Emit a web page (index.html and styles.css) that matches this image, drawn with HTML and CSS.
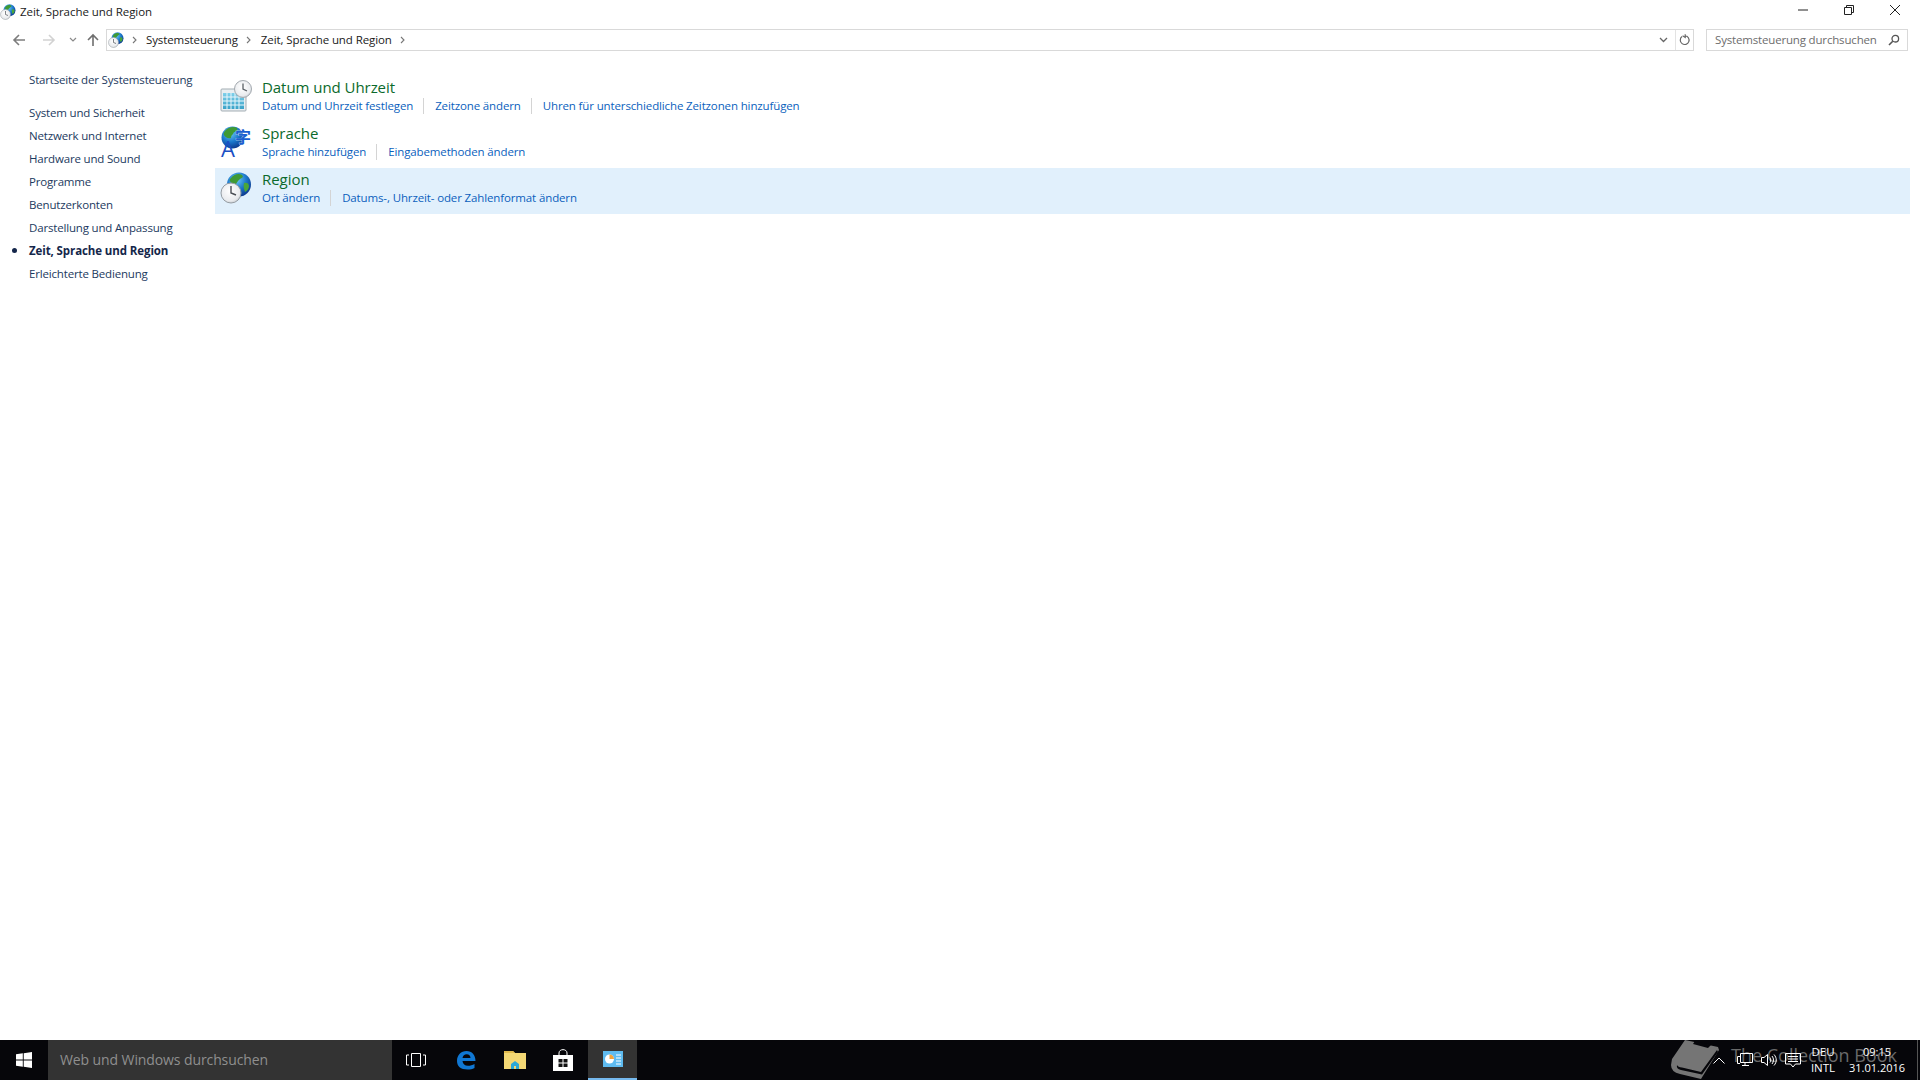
FILE: index.html
```html
<!DOCTYPE html>
<html lang="de">
<head>
<meta charset="utf-8">
<title>Zeit, Sprache und Region</title>
<link rel="stylesheet" href="styles.css">
</head>
<body>
<div class="window">
  <header class="titlebar">
    <svg class="ic16" viewBox="0 0 32 32">
      <defs>
        <radialGradient id="globe" cx="0.4" cy="0.3" r="0.8">
          <stop offset="0" stop-color="#6fcbf7"/><stop offset="0.5" stop-color="#1c78cc"/><stop offset="1" stop-color="#0a2a7e"/>
        </radialGradient>
        <radialGradient id="face" cx="0.45" cy="0.4" r="0.7">
          <stop offset="0" stop-color="#ffffff"/><stop offset="0.7" stop-color="#e9ebee"/><stop offset="1" stop-color="#b1b7bc"/>
        </radialGradient>
        <linearGradient id="cal" x1="0" y1="0" x2="0" y2="1">
          <stop offset="0" stop-color="#7fd0ea"/><stop offset="1" stop-color="#3aa2c8"/>
        </linearGradient>
        <symbol id="region" viewBox="0 0 32 32">
          <circle cx="19" cy="12.500" r="12" fill="url(#globe)"/>
          <path d="M11 6c3-4 8-5 11-3 2 2 0 3-2 4-2 2-3 3-4 5-3 1-5-1-6-3-1-1 0-2 1-3z" fill="#3f9a34"/>
          <path d="M24 11c2-1 5 0 5 3 0 3-2 5-4 6-1-3-2-6-1-9z" fill="#4aa63a"/>
          <circle cx="11" cy="21" r="10" fill="url(#face)" stroke="#969da3" stroke-width="1"/>
          <path d="M11 14v7l5 2" fill="none" stroke="#4a4f55" stroke-width="1.400"/>
        </symbol>
      </defs>
      <use href="#region"/>
    </svg>
    <span class="title-text">Zeit, Sprache und Region</span>
    <div class="winctl">
      <span class="wbtn"><svg width="12" height="12" viewBox="0 0 12 12"><path d="M1 6h10" stroke="#222" stroke-width="1"/></svg></span>
      <span class="wbtn"><svg width="12" height="12" viewBox="0 0 12 12"><path d="M1.500 3.500h7v7h-7zM3.500 3.500v-2h7v7h-2" fill="none" stroke="#222" stroke-width="1"/></svg></span>
      <span class="wbtn"><svg width="12" height="12" viewBox="0 0 12 12"><path d="M1 1l10 10M11 1L1 11" stroke="#222" stroke-width="1"/></svg></span>
    </div>
  </header>

  <nav class="navbar">
    <div class="navbtns">
      <svg class="nb nb-back" width="14" height="14" viewBox="0 0 14 14"><path d="M13 7H2M7 2L2 7l5 5" fill="none" stroke="#7d7d7d" stroke-width="1.600"/></svg>
      <svg class="nb nb-fwd" width="14" height="14" viewBox="0 0 14 14"><path d="M1 7h11M7 2l5 5-5 5" fill="none" stroke="#d2d2d2" stroke-width="1.600"/></svg>
      <svg class="nb nb-down" width="8" height="6" viewBox="0 0 8 6"><path d="M1 1l3 3 3-3" fill="none" stroke="#8a8a8a" stroke-width="1.200"/></svg>
      <svg class="nb nb-up" width="14" height="14" viewBox="0 0 14 14"><path d="M7 13V2M2 7l5-5 5 5" fill="none" stroke="#6f6f6f" stroke-width="1.600"/></svg>
    </div>
    <div class="address">
      <svg class="ic16" viewBox="0 0 32 32"><use href="#region"/></svg>
      <svg class="crumb-sep first" width="5" height="8" viewBox="0 0 5 8"><path d="M1 1l3 3-3 3" fill="none" stroke="#777" stroke-width="1.100"/></svg>
      <span class="crumb">Systemsteuerung</span>
      <svg class="crumb-sep" width="5" height="8" viewBox="0 0 5 8"><path d="M1 1l3 3-3 3" fill="none" stroke="#777" stroke-width="1.100"/></svg>
      <span class="crumb">Zeit, Sprache und Region</span>
      <svg class="crumb-sep" width="5" height="8" viewBox="0 0 5 8"><path d="M1 1l3 3-3 3" fill="none" stroke="#777" stroke-width="1.100"/></svg>
      <span class="spacer"></span>
      <svg class="addr-drop" width="9" height="6" viewBox="0 0 9 6"><path d="M1 1l3.500 3.500L8 1" fill="none" stroke="#666" stroke-width="1.300"/></svg>
      <span class="refresh">
        <svg width="12" height="12" viewBox="0 0 12 12"><path d="M3 2.600a4.400 4.400 0 1 0 3-.9M6.200 .2v3.200L3.600 1.800" fill="none" stroke="#666" stroke-width="1.200"/></svg>
      </span>
    </div>
    <div class="searchbox">
      <span class="search-text">Systemsteuerung durchsuchen</span>
      <svg width="12" height="12" viewBox="0 0 12 12"><circle cx="7.300" cy="4.700" r="3.300" fill="none" stroke="#555" stroke-width="1.300"/><path d="M4.800 7.200L1 11" stroke="#555" stroke-width="1.600"/></svg>
    </div>
  </nav>

  <main class="body">
    <aside class="sidebar">
      <a class="side-home">Startseite der Systemsteuerung</a>
      <a class="side-link">System und Sicherheit</a>
      <a class="side-link">Netzwerk und Internet</a>
      <a class="side-link">Hardware und Sound</a>
      <a class="side-link">Programme</a>
      <a class="side-link">Benutzerkonten</a>
      <a class="side-link">Darstellung und Anpassung</a>
      <a class="side-link current">Zeit, Sprache und Region</a>
      <a class="side-link">Erleichterte Bedienung</a>
    </aside>
    <section class="content">
      <div class="item">
        <svg class="ic32" viewBox="0 0 32 32">
          <rect x="1" y="9" width="25" height="22" rx="1" fill="#e9eef1" stroke="#a3adb3"/>
          <rect x="3" y="13" width="21" height="16" fill="url(#cal)"/>
          <path d="M3 17h21M3 21h21M3 25h21M7 13v16M11 13v16M15 13v16M19 13v16" stroke="#eaf6fb" stroke-width="1"/>
          <circle cx="23" cy="9" r="8.500" fill="url(#face)" stroke="#a3a9af"/>
          <path d="M23 3.500V9l4 2" fill="none" stroke="#5a6066" stroke-width="1.300"/>
        </svg>
        <div class="item-text">
          <h2 class="item-head">Datum und Uhrzeit</h2>
          <div class="item-links"><a>Datum und Uhrzeit festlegen</a><a>Zeitzone ändern</a><a>Uhren für unterschiedliche Zeitzonen hinzufügen</a></div>
        </div>
      </div>
      <div class="item">
        <svg class="ic32 ic-lang" viewBox="0 0 32 32">
          <circle cx="12.500" cy="11.500" r="11" fill="url(#globe)"/>
          <path d="M5 5c3-4 9-5 12-3 1 2-1 4-3 4-1 3-3 3-3 6-3 1-6-1-7-3-1-1 0-3 1-4z" fill="#3f9a34"/>
          <text class="glyph-a" x="1" y="31">A</text>
          <text class="glyph-zi" x="15" y="17">字</text>
        </svg>
        <div class="item-text">
          <h2 class="item-head">Sprache</h2>
          <div class="item-links"><a>Sprache hinzufügen</a><a>Eingabemethoden ändern</a></div>
        </div>
      </div>
      <div class="item active">
        <svg class="ic32" viewBox="0 0 32 32"><use href="#region"/></svg>
        <div class="item-text">
          <h2 class="item-head">Region</h2>
          <div class="item-links"><a>Ort ändern</a><a>Datums-, Uhrzeit- oder Zahlenformat ändern</a></div>
        </div>
      </div>
    </section>
  </main>

  <footer class="taskbar">
    <div class="watermark">
      <svg width="56" height="40" viewBox="0 0 56 40">
        <path d="M4 19L17 0l33 7 1 3-18 29-21-5q-9-2-9-9z" fill="#757575"/>
        <path d="M9 25q1 2 5 2.500l19 4.500L49 10l1 2-16 22.500L13 30q-5-1-4-5z" fill="#06060a"/>
        <path d="M27 1l16 4-3 3-15-4z" fill="#06060a"/>
      </svg>
      <span class="wm-text">The Collection Book</span>
    </div>
    <div class="start">
      <svg width="16" height="16" viewBox="0 0 16 16"><path d="M0 2.300L6.800 1.300V7.500H0zM7.700 1.200L16 0V7.500H7.700zM0 8.400H6.800V14.700L0 13.700zM7.700 8.400H16V16L7.700 14.800z" fill="#fff"/></svg>
    </div>
    <div class="tb-search">Web und Windows durchsuchen</div>
    <div class="tb-btn nudge">
      <svg width="20" height="14" viewBox="0 0 20 14"><path d="M5.500.5h9v13h-9zM3 2H.5v10H3M17 2h2.500v10H17" fill="none" stroke="#fff"/></svg>
    </div>
    <div class="tb-btn">
      <svg width="20" height="20" viewBox="0 0 20 20"><path d="M1 11C1 5 5 1 10.500 1 16 1 19.500 5 19.500 11H6.500c.3 3 2.300 4.800 5.500 4.800 2.400 0 4.500-.6 6.500-1.800v4c-2 1-4.300 1.500-6.900 1.500C4.500 19.500 1 16 1 11zM6.500 8h8c0-2.500-1.500-3.800-3.800-3.800S6.900 5.500 6.500 8z" fill="#1077d3"/></svg>
    </div>
    <div class="tb-btn">
      <svg width="22" height="20" viewBox="0 0 22 20"><path d="M0 1h9l2 2h11v16H0z" fill="#f3d774"/><path d="M0 1h9l2 2H0z" fill="#e0b94c"/><path d="M7 19v-5l4-3 4 3v5h-3v-3h-2v3z" fill="#2ba8d8"/></svg>
    </div>
    <div class="tb-btn nudge">
      <svg width="20" height="22" viewBox="0 0 20 22"><path d="M6 6V4c0-4.500 8-4.500 8 0v2" fill="none" stroke="#fff"/><path d="M0 6h20v16H0z" fill="#fff"/><path d="M5.500 10h4v3.500h-4zM10.500 10h4v3.500h-4zM5.500 14.500h4V18h-4zM10.500 14.500h4V18h-4z" fill="#111"/></svg>
    </div>
    <div class="tb-btn running">
      <svg width="20" height="16" viewBox="0 0 20 16"><rect width="20" height="16" fill="#5ebbf0"/><circle cx="6.500" cy="8" r="4.500" fill="#fff"/><path d="M6.500 8V3.500A4.500 4.500 0 0 1 11 8z" fill="#f2a33a"/><path d="M13 4h5M13 7h5M13 10h5M13 13h5" stroke="#fff"/></svg>
    </div>
    <span class="tb-spacer"></span>
    <div class="tray">
      <svg class="t-chev" width="12" height="7" viewBox="0 0 12 7"><path d="M.5 6.500L6 1l5.500 5.500" fill="none" stroke="#fff"/></svg>
      <svg class="t-net" width="16" height="14" viewBox="0 0 16 14"><path d="M3.500.5h12v9h-12zM8 9.500v3M5 12.500h7M.5 3.500H3M.5 3.500v7H3" fill="none" stroke="#fff"/></svg>
      <svg class="t-vol" width="16" height="14" viewBox="0 0 16 14"><path d="M.5 4.500h2.500l3.500-3v11l-3.500-3H.5zM9 4.500c1 1.500 1 3.500 0 5M11 3c2 2.500 2 5.500 0 8M13 1.500c3 3.500 3 7.500 0 11" fill="none" stroke="#fff"/></svg>
      <svg class="t-msg" width="16" height="15" viewBox="0 0 16 15"><path d="M.5.500h15v10.500h-5l-2.500 3-2.500-3h-5zM3 3.500h10M3 6h10M3 8.500h10" fill="none" stroke="#fff"/></svg>
      <div class="t-lang"><span>DEU</span><span>INTL</span></div>
      <div class="t-clock"><span>09:15</span><span>31.01.2016</span></div>
      <span class="t-show"></span>
    </div>
  </footer>
</div>
</body>
</html>
```
FILE: styles.css
```css
* { box-sizing: border-box; }
html, body { margin: 0; height: 100%; }
body { background: #fff; font-family: "Open Sans", "Noto Sans", sans-serif; font-size: 11.500px; color: #1a1a1a; overflow: hidden; }
.window { height: 1080px; display: flex; flex-direction: column; }

.ic16 { width: 16px; height: 16px; flex: none; }
.ic32 { width: 32px; height: 32px; flex: none; }

.titlebar { height: 24px; display: flex; align-items: center; flex: none; }
.title-text { margin-left: 4px; margin-top: -2px; letter-spacing: -0.050px; }
.winctl { margin-left: auto; display: flex; margin-right: 2px; margin-top: -4px; }
.wbtn { width: 46px; height: 20px; display: flex; align-items: center; justify-content: center; }

.navbar { height: 22px; margin-top: 5px; display: flex; flex: none; }
.navbtns { width: 106px; display: flex; align-items: center; flex: none; }
.nb { flex: none; }
.nb-back { margin-left: 12px; }
.nb-fwd { margin-left: 16px; }
.nb-down { margin-left: 13px; }
.nb-up { margin-left: 9px; }

.address { width: 1588px; border: 1px solid #d9d9d9; display: flex; align-items: center; padding-left: 1px; flex: none; }
.crumb { letter-spacing: -0.100px; color: #1a1a1a; margin-top: -2px; }
.crumb-sep { margin: 0 10px 0 8px; flex: none; }
.crumb-sep.first { margin-left: 8px; margin-right: 9px; }
.spacer { flex: 1; }
.addr-drop { margin-right: 7px; }
.refresh { width: 18px; height: 100%; border-left: 1px solid #e3e3e3; display: flex; align-items: center; justify-content: center; }

.searchbox { width: 202px; margin-left: 12px; border: 1px solid #d9d9d9; display: flex; align-items: center; justify-content: space-between; padding: 0 7px 0 8px; flex: none; }
.search-text { color: #6d6d6d; letter-spacing: -0.170px; margin-top: -1px; }

.body { flex: 1; display: flex; min-height: 0; }
.sidebar { width: 215px; flex: none; padding: 17px 0 0 29px; display: flex; flex-direction: column; }
.sidebar a { height: 23px; line-height: 23px; color: #1c3a60; white-space: nowrap; letter-spacing: -0.170px; }
.side-home { margin-bottom: 10px; }
.sidebar .side-link.current { font-weight: 700; color: #14264a; position: relative; letter-spacing: -0.100px; }
.current::before { content: ""; position: absolute; left: -17px; top: 9px; width: 5px; height: 5px; border-radius: 50%; background: #14264a; }

.content { flex: 1; padding: 25px 10px 0 0; }
.item { height: 46px; display: flex; align-items: flex-start; padding-left: 5px; }
.item.active { background: #e1f0fc; }
.ic32 { margin-top: 4px; }
.ic-lang { overflow: visible; }
.item-text { margin-left: 10px; padding-top: 1px; }
.item-head { margin: 0 0 1px; font-size: 15px; line-height: 20px; font-weight: 400; color: #0b6a2c; letter-spacing: -0.050px; }
.item-links { display: flex; line-height: 16px; }
.item-links a { color: #0b5fbd; letter-spacing: -0.130px; }
.item-links a + a { margin-left: 10px; padding-left: 11px; border-left: 1px solid #d4d4d4; }
.glyph-a { font-family: "Open Sans", sans-serif; font-size: 22px; fill: #1b4fc4; }
.glyph-zi { font-family: "Noto Sans CJK SC", sans-serif; font-size: 16px; font-weight: 700; fill: #1b5fd0; stroke: #fff; stroke-width: 0.500px; paint-order: stroke; }

.taskbar { height: 40px; flex: none; background: #06060a; display: flex; align-items: stretch; position: relative; overflow: hidden; }
.watermark { position: absolute; left: 1668px; top: 0; height: 40px; display: flex; }
.wm-text { margin-left: 7px; margin-top: 3px; font-size: 18px; line-height: 24px; color: #6a6a6a; white-space: nowrap; }
.start { width: 48px; display: flex; align-items: center; justify-content: center; }
.tb-search { width: 344px; background: #333; color: #8f8f8f; font-size: 14px; line-height: 40px; padding-left: 12px; letter-spacing: -0.100px; }
.tb-btn { width: 49px; display: flex; align-items: center; justify-content: center; }
.tb-btn.nudge svg { margin-right: 2px; }
.tb-btn.running { background: #333; border-bottom: 2px solid #76b9ed; }
.tb-spacer { flex: 1; }

.tray { display: flex; align-items: center; color: #fff; position: relative; padding-right: 2px; }
.tray svg { flex: none; }
.t-net { margin-left: 12px; }
.t-vol { margin-left: 8px; }
.t-msg { margin-left: 8px; }
.t-lang { margin-left: 10px; width: 24px; display: flex; flex-direction: column; align-items: center; font-size: 11.500px; line-height: 16px; }
.t-clock { margin-left: 14px; width: 56px; display: flex; flex-direction: column; align-items: center; line-height: 16px; font-size: 11px; }
.t-show { width: 1px; height: 40px; background: #555; margin-left: 12px; }
```
